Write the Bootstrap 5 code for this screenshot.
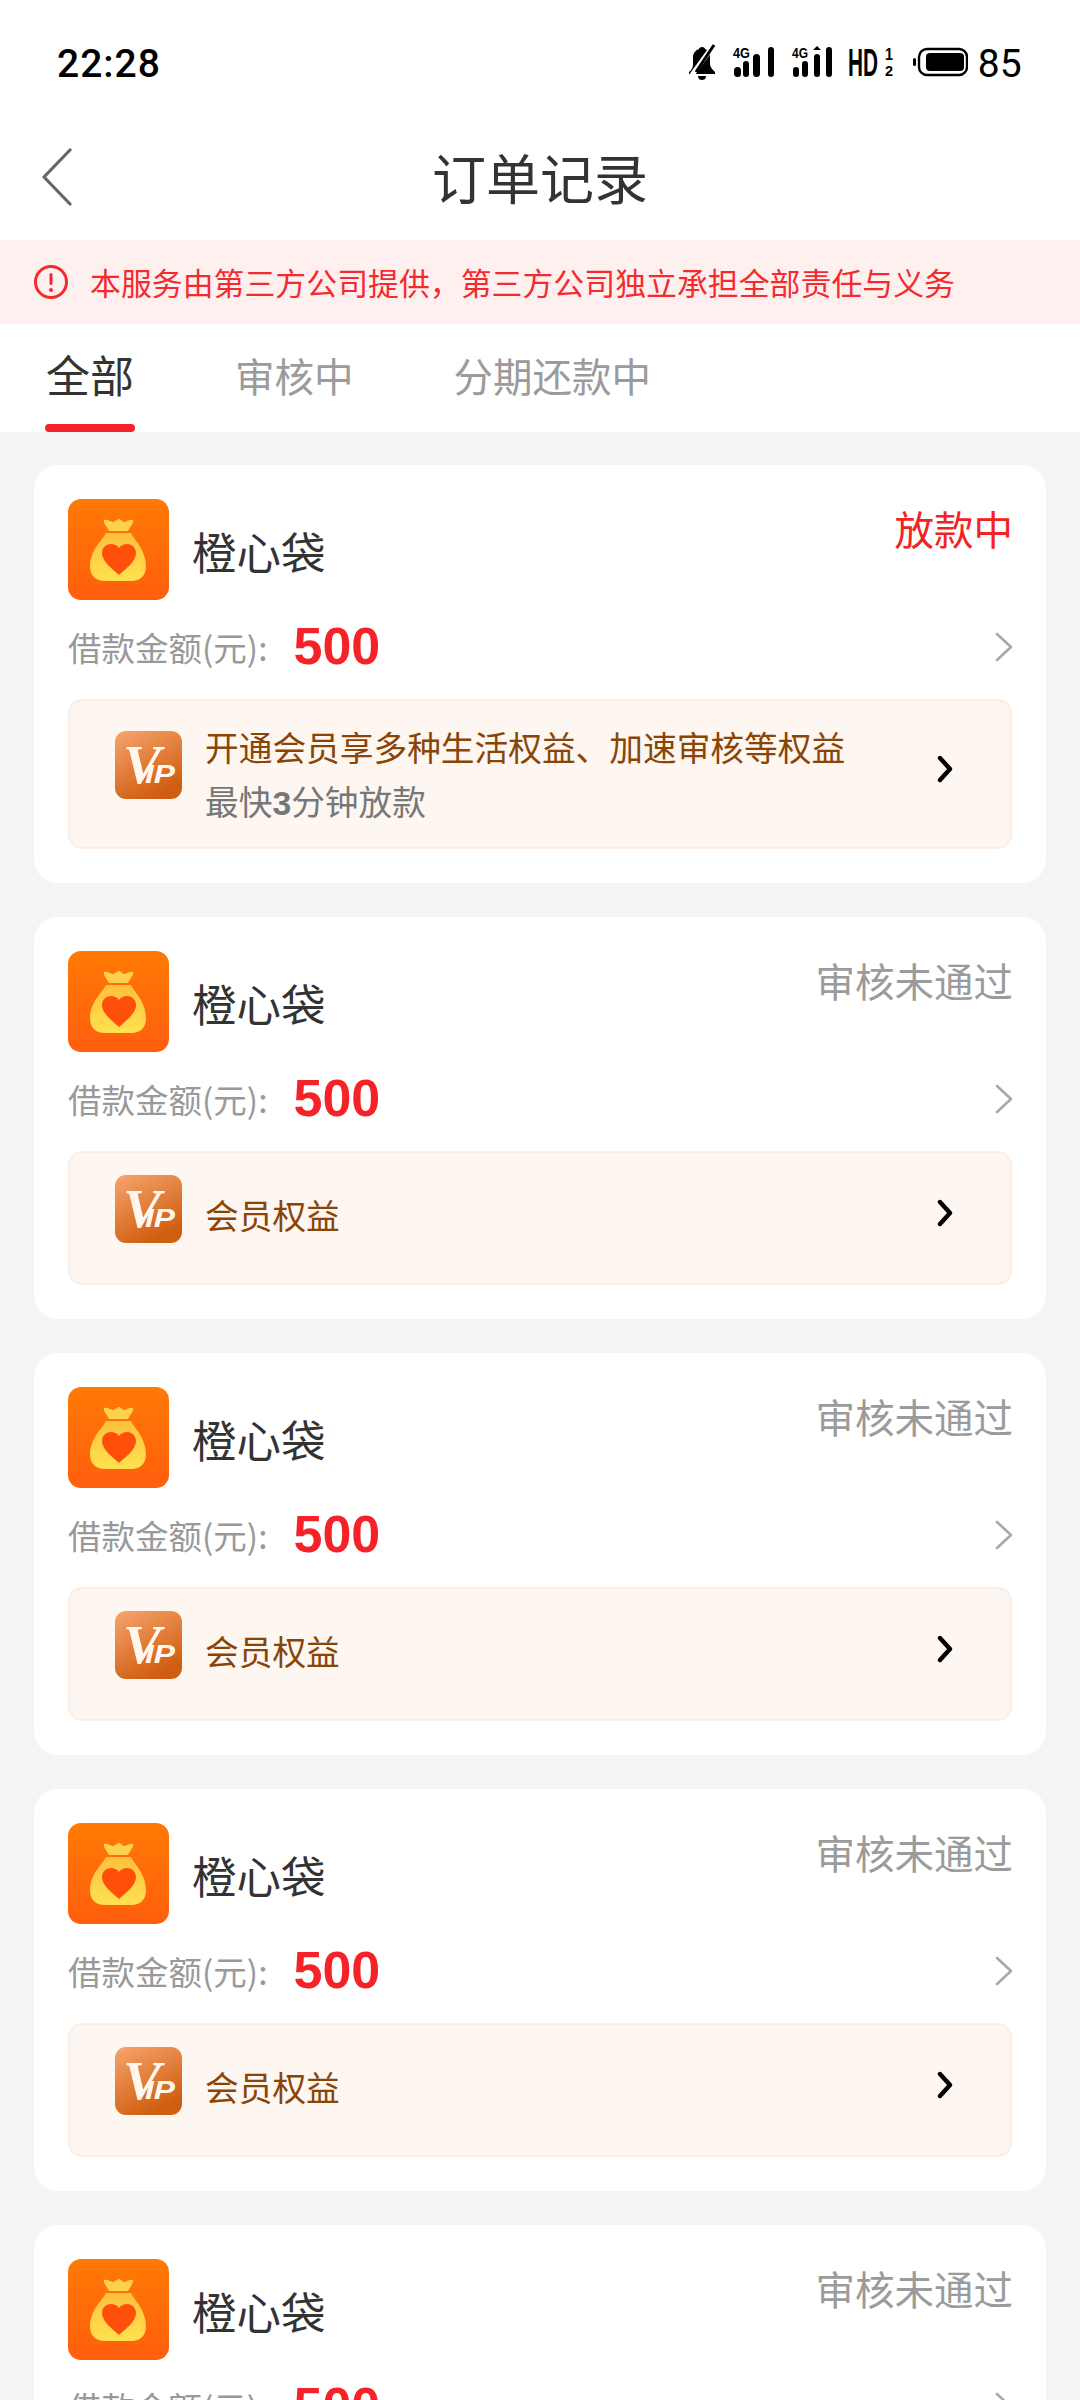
<!DOCTYPE html>
<html lang="zh-CN">
<head>
<meta charset="utf-8">
<title>订单记录</title>
<link rel="stylesheet" href="https://cdn.jsdelivr.net/npm/bootstrap@5.3.0/dist/css/bootstrap.min.css">
<style>
html,body{margin:0;background:#f4f4f4;}
body{font-family:"Noto Sans CJK SC","Noto Sans",sans-serif;}
.screen{width:1080px;height:2400px;overflow:hidden;background:#f4f4f4;}
.status-row{height:120px;background:#fff;padding:3px 58px 0 57px;font-family:Roboto,"Liberation Sans",sans-serif;color:#000;}
.clock{font-size:39px;font-weight:500;letter-spacing:1px;line-height:1;margin-top:6px;}
.batt-num{font-size:39px;line-height:1;margin-left:10px;letter-spacing:.2px;margin-top:6px;}
.status-icons svg{display:block;}
.hd-ic{margin-left:14px;margin-right:3px;}
.head-row{height:120px;background:#fff;position:relative;}
.head-title{font-size:54px;color:#333;line-height:1;margin-bottom:6px;}
.back-btn{position:absolute;left:41px;top:28px;}
.notice-row{height:84px;background:#fff0f0;color:#f52a2f;font-size:30.9px;padding-left:33px;gap:21px;line-height:1;}
.tab-row{height:108px;background:#fff;padding-left:45px;}
.tab-item{font-size:39.5px;color:#9b9b9b;line-height:1;height:108px;padding-top:31px;margin-right:100px;position:relative;}
.tab-item.on{font-size:44px;color:#333;padding:28px 1px 0;margin-right:100px;}
.tab-item.on::after{content:"";position:absolute;left:0;right:0;bottom:0;height:8px;background:#f52227;border-radius:4px;}
.order-list{padding:33px 34px 0;}
.order-card{border:0;border-radius:24px;background:#fff;padding:34px;margin-bottom:34px;}
.prod-name{font-size:44.5px;color:#333;line-height:1;margin-left:23px;margin-top:3px;}
.state-txt{font-size:39.5px;line-height:57px;color:#9b9b9b;margin-right:-1px;}
.state-txt.red{color:#f52222;}
.amt-row{height:68px;margin-top:10px;margin-bottom:21px;}
.amt-label{font-size:33.5px;color:#999;line-height:1;margin-top:6px;}
.amt-num{font-family:"Liberation Sans",Arial,sans-serif;font-weight:700;font-size:52px;color:#f52227;line-height:1;margin-left:26px;margin-top:4px;}
.grey-arrow{margin-right:-1px;margin-top:6px;}
.mem-box{height:134px;background:#fdf6f1;border:2px solid #fbeee5;border-radius:14px;padding:0 56px 0 45px;}
.mem-box.tall{height:150px;}
.vip-ic{margin-bottom:18px;}
.mem-arrow{margin-bottom:10px;}
.mem-main{font-size:33.7px;line-height:54px;color:#8a4506;margin-left:23px;margin-bottom:6px;}
.mem-main.two-line{margin-bottom:0;padding-top:2px;}
.mem-sub{font-size:33.7px;line-height:54px;color:#777;}
.mem-sub b{font-family:"Liberation Sans",sans-serif;font-weight:700;color:#777;}
</style>
</head>
<body>
<svg width="0" height="0" class="position-absolute">
  <defs>
    <linearGradient id="gBg" x1="0" y1="0" x2="0" y2="1"><stop offset="0" stop-color="#ff7a05"/><stop offset="1" stop-color="#ff5e0e"/></linearGradient>
    <linearGradient id="gBag" x1="0" y1="0" x2="0" y2="1"><stop offset="0" stop-color="#fdc03d"/><stop offset="1" stop-color="#ffe250"/></linearGradient>
    <linearGradient id="gVip" x1="0" y1="0" x2=".5" y2="1"><stop offset="0" stop-color="#f6a56f"/><stop offset="1" stop-color="#d05e10"/></linearGradient>
    <symbol id="bagLogo" viewBox="0 0 101 101">
      <rect width="101" height="101" rx="13" fill="url(#gBg)"/>
      <path d="M36 21c4-1 6 2 9 2 2 0 4-3 6-3s3 3 5 3c3 0 6-3 9-2 1 3-3 7-5 11H41c-2-4-6-8-5-11z" fill="#fdd04e"/>
      <path d="M38 34h25c2 5 15 17 15 33 0 10-6 15-15 15H37c-9 0-15-5-15-15 0-16 14-28 16-33z" fill="url(#gBag)"/>
      <path d="M51 76C43 69 34 62 34 54c0-6 5-9 9-9 3 0 6 1 8 4 2-3 5-4 8-4 4 0 9 3 9 9 0 8-9 15-17 22z" fill="#ff4f0a"/>
    </symbol>
    <symbol id="vipLogo" viewBox="0 0 67 68">
      <rect width="67" height="68" rx="11" fill="url(#gVip)"/>
      <text x="8" y="52" font-family="'Liberation Serif',serif" font-weight="700" font-style="italic" font-size="54" textLength="38" lengthAdjust="spacingAndGlyphs" fill="#fff6ee">V</text>
      <text x="30" y="52" font-family="'Liberation Sans',sans-serif" font-weight="700" font-style="italic" font-size="25" textLength="30" lengthAdjust="spacingAndGlyphs" fill="#fff6ee">IP</text>
    </symbol>
    <symbol id="greyArrow" viewBox="0 0 18 30"><path d="M2 2l14 13L2 28" fill="none" stroke="#a8a8a8" stroke-width="2.6" stroke-linecap="round" stroke-linejoin="round"/></symbol>
    <symbol id="blackArrow" viewBox="0 0 17 28"><path d="M3 3l10 11L3 25" fill="none" stroke="#000" stroke-width="4.4" stroke-linecap="round" stroke-linejoin="round"/></symbol>
  </defs>
</svg>
<div class="screen">
  <div class="status-row d-flex justify-content-between align-items-center">
    <div class="clock">22:28</div>
    <div class="status-icons d-flex align-items-center">
      <svg width="28" height="36" viewBox="0 0 28 36"><path d="M14 3c2 0 3 1 3 2 3 1 5 4 5 8v7c0 3 2 5 5 8v2H1v-2c3-2 4-5 4-8v-7c0-4 3-7 6-8 0-1 1-2 3-2z" fill="#000"/><path d="M10 32h8c0 3-2 4-4 4s-4-1-4-4z" fill="#000"/><path d="M4 31L25 2" stroke="#fff" stroke-width="5"/><path d="M8 28L26 1" stroke="#000" stroke-width="3"/></svg>
      <svg class="ms-3" width="44" height="34" viewBox="0 0 44 34"><text x="1" y="13" font-family="'Liberation Sans',sans-serif" font-weight="700" font-size="14" textLength="17" lengthAdjust="spacingAndGlyphs">4G</text><rect x="2" y="22" width="7" height="10" rx="3.5"/><rect x="11" y="16" width="6" height="16" rx="3"/><rect x="21" y="9" width="7" height="23" rx="3.5"/><rect x="36" y="2" width="6" height="30" rx="3"/></svg>
      <svg class="ms-3" width="42" height="34" viewBox="0 0 42 34"><text x="0" y="13" font-family="'Liberation Sans',sans-serif" font-weight="700" font-size="14" textLength="16" lengthAdjust="spacingAndGlyphs">4G</text><rect x="1" y="22" width="6" height="10" rx="3"/><rect x="10" y="16" width="6" height="16" rx="3"/><rect x="22" y="9" width="6" height="23" rx="3"/><path d="M25 1l4 4h-8z"/><rect x="34" y="2" width="6" height="30" rx="3"/></svg>
      <svg class="hd-ic" width="46" height="34" viewBox="0 0 46 34"><text x="0" y="31" font-family="'Liberation Sans',sans-serif" font-weight="700" font-size="38" textLength="30" lengthAdjust="spacingAndGlyphs">HD</text><text x="37" y="15" font-family="'Liberation Sans',sans-serif" font-weight="700" font-size="16" textLength="8" lengthAdjust="spacingAndGlyphs">1</text><text x="37" y="31" font-family="'Liberation Sans',sans-serif" font-weight="700" font-size="15" textLength="8" lengthAdjust="spacingAndGlyphs">2</text></svg>
      <svg class="ms-3" width="55" height="30" viewBox="0 0 55 30"><rect x="0" y="11" width="3" height="8" rx="1.5"/><rect x="6" y="2" width="48" height="26" rx="8" fill="none" stroke="#000" stroke-width="2.4"/><rect x="13" y="6" width="38" height="18" rx="4"/></svg>
      <div class="batt-num">85</div>
    </div>
  </div>

  <div class="head-row d-flex align-items-center justify-content-center">
    <svg class="back-btn" width="32" height="58" viewBox="0 0 32 58"><path d="M29 2L3 29l26 27" fill="none" stroke="#666" stroke-width="3.2" stroke-linecap="round" stroke-linejoin="round"/></svg>
    <div class="head-title">订单记录</div>
  </div>

  <div class="notice-row d-flex align-items-center">
    <svg width="36" height="36" viewBox="0 0 36 36"><circle cx="18" cy="18" r="15.5" fill="none" stroke="#f52a2f" stroke-width="3"/><rect x="16.5" y="9" width="3" height="12" rx="1.5" fill="#f52a2f"/><circle cx="18" cy="26" r="2" fill="#f52a2f"/></svg>
    <div>本服务由第三方公司提供，第三方公司独立承担全部责任与义务</div>
  </div>

  <div class="tab-row d-flex">
    <div class="tab-item on">全部</div>
    <div class="tab-item">审核中</div>
    <div class="tab-item">分期还款中</div>
  </div>

  <div class="order-list">
    <div class="card order-card">
      <div class="d-flex justify-content-between align-items-start">
        <div class="d-flex align-items-center"><svg width="101" height="101"><use href="#bagLogo"/></svg><div class="prod-name">橙心袋</div></div>
        <div class="state-txt red">放款中</div>
      </div>
      <div class="amt-row d-flex align-items-center justify-content-between">
        <div class="d-flex align-items-center"><span class="amt-label">借款金额(元):</span><span class="amt-num">500</span></div>
        <svg class="grey-arrow" width="18" height="30"><use href="#greyArrow"/></svg>
      </div>
      <div class="mem-box tall d-flex align-items-center">
        <svg class="vip-ic flex-shrink-0" width="67" height="68"><use href="#vipLogo"/></svg>
        <div class="flex-grow-1 mem-main two-line">开通会员享多种生活权益、加速审核等权益<div class="mem-sub">最快<b>3</b>分钟放款</div></div>
        <svg class="mem-arrow flex-shrink-0" width="17" height="28"><use href="#blackArrow"/></svg>
      </div>
    </div>

    <div class="card order-card">
      <div class="d-flex justify-content-between align-items-start">
        <div class="d-flex align-items-center"><svg width="101" height="101"><use href="#bagLogo"/></svg><div class="prod-name">橙心袋</div></div>
        <div class="state-txt">审核未通过</div>
      </div>
      <div class="amt-row d-flex align-items-center justify-content-between">
        <div class="d-flex align-items-center"><span class="amt-label">借款金额(元):</span><span class="amt-num">500</span></div>
        <svg class="grey-arrow" width="18" height="30"><use href="#greyArrow"/></svg>
      </div>
      <div class="mem-box d-flex align-items-center">
        <svg class="vip-ic flex-shrink-0" width="67" height="68"><use href="#vipLogo"/></svg>
        <div class="flex-grow-1 mem-main">会员权益</div>
        <svg class="mem-arrow flex-shrink-0" width="17" height="28"><use href="#blackArrow"/></svg>
      </div>
    </div>

    <div class="card order-card">
      <div class="d-flex justify-content-between align-items-start">
        <div class="d-flex align-items-center"><svg width="101" height="101"><use href="#bagLogo"/></svg><div class="prod-name">橙心袋</div></div>
        <div class="state-txt">审核未通过</div>
      </div>
      <div class="amt-row d-flex align-items-center justify-content-between">
        <div class="d-flex align-items-center"><span class="amt-label">借款金额(元):</span><span class="amt-num">500</span></div>
        <svg class="grey-arrow" width="18" height="30"><use href="#greyArrow"/></svg>
      </div>
      <div class="mem-box d-flex align-items-center">
        <svg class="vip-ic flex-shrink-0" width="67" height="68"><use href="#vipLogo"/></svg>
        <div class="flex-grow-1 mem-main">会员权益</div>
        <svg class="mem-arrow flex-shrink-0" width="17" height="28"><use href="#blackArrow"/></svg>
      </div>
    </div>

    <div class="card order-card">
      <div class="d-flex justify-content-between align-items-start">
        <div class="d-flex align-items-center"><svg width="101" height="101"><use href="#bagLogo"/></svg><div class="prod-name">橙心袋</div></div>
        <div class="state-txt">审核未通过</div>
      </div>
      <div class="amt-row d-flex align-items-center justify-content-between">
        <div class="d-flex align-items-center"><span class="amt-label">借款金额(元):</span><span class="amt-num">500</span></div>
        <svg class="grey-arrow" width="18" height="30"><use href="#greyArrow"/></svg>
      </div>
      <div class="mem-box d-flex align-items-center">
        <svg class="vip-ic flex-shrink-0" width="67" height="68"><use href="#vipLogo"/></svg>
        <div class="flex-grow-1 mem-main">会员权益</div>
        <svg class="mem-arrow flex-shrink-0" width="17" height="28"><use href="#blackArrow"/></svg>
      </div>
    </div>

    <div class="card order-card">
      <div class="d-flex justify-content-between align-items-start">
        <div class="d-flex align-items-center"><svg width="101" height="101"><use href="#bagLogo"/></svg><div class="prod-name">橙心袋</div></div>
        <div class="state-txt">审核未通过</div>
      </div>
      <div class="amt-row d-flex align-items-center justify-content-between">
        <div class="d-flex align-items-center"><span class="amt-label">借款金额(元):</span><span class="amt-num">500</span></div>
        <svg class="grey-arrow" width="18" height="30"><use href="#greyArrow"/></svg>
      </div>
    </div>
  </div>
</div>
<script src="https://cdn.jsdelivr.net/npm/bootstrap@5.3.0/dist/js/bootstrap.bundle.min.js"></script>
</body>
</html>
